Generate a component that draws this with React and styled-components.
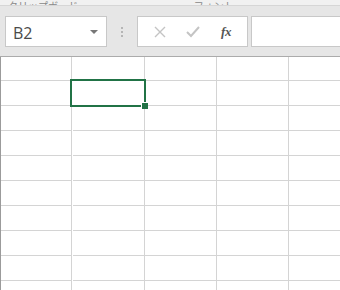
import styled, { createGlobalStyle } from 'styled-components';

const Global = createGlobalStyle`
  html, body {
    margin: 0;
    padding: 0;
    background: #ffffff;
    overflow: hidden;
  }
  body {
    font-family: "Open Sans", "Noto Sans", "Noto Sans CJK JP", sans-serif;
  }
`;

const Page = styled.div`
  width: 340px;
  height: 290px;
  overflow: hidden;
  display: flex;
  flex-direction: column;
`;

const Ribbon = styled.div`
  flex-shrink: 0;
  height: 5px;
  overflow: hidden;
  background: #f1f1f1;
  border-bottom: 1px solid #d6d6d6;
  display: flex;
  align-items: flex-end;
  padding-left: 8px;
  gap: 14px;
`;

const RibbonLabel = styled.span`
  font-family: "Noto Sans CJK JP", sans-serif;
  font-size: 10px;
  line-height: 10px;
  margin-bottom: -6px;
  color: #888;
  white-space: nowrap;
  margin-left: ${(p) => p.$offset || 0}px;
`;

const Toolbar = styled.div`
  flex-shrink: 0;
  height: 51px;
  background: #e6e6e6;
  border-bottom: 1px solid #ababab;
  display: flex;
  align-items: flex-start;
  padding: 10px 0 0 5px;
  box-sizing: border-box;
`;

const NameBox = styled.div`
  width: 102px;
  height: 31px;
  box-sizing: border-box;
  background: #fff;
  border: 1px solid #c8c8c8;
  display: flex;
  align-items: center;
  justify-content: space-between;
  padding: 3px 8px 0 7px;
`;

const NameText = styled.span`
  font-family: "Open Sans", sans-serif;
  font-size: 16px;
  color: #4a4a4a;
`;

const Caret = styled.span`
  width: 0;
  height: 0;
  border-left: 4px solid transparent;
  border-right: 4px solid transparent;
  border-top: 4px solid #777;
  margin-bottom: 3px;
`;

const Grip = styled.div`
  width: 30px;
  height: 31px;
  display: flex;
  flex-direction: column;
  align-items: center;
  justify-content: center;
  gap: 2px;
`;

const Dot = styled.span`
  width: 2px;
  height: 2px;
  background: #b5b5b5;
`;

const FxBox = styled.div`
  width: 111px;
  height: 31px;
  box-sizing: border-box;
  background: #fff;
  border: 1px solid #c8c8c8;
  display: flex;
  align-items: center;
  padding-left: 14px;
  gap: 17px;
`;

const IconSlot = styled.span`
  width: 16px;
  display: flex;
  justify-content: center;
  align-items: center;
`;

const FxText = styled.span`
  font-family: "Liberation Serif", serif;
  font-style: italic;
  font-weight: bold;
  font-size: 13px;
  color: #555;
  letter-spacing: -0.5px;
`;

const Input = styled.div`
  flex: 1;
  height: 31px;
  margin-left: 3px;
  box-sizing: border-box;
  background: #fff;
  border: 1px solid #c8c8c8;
  border-right: none;
`;

const Sheet = styled.div`
  position: relative;
  flex: 1;
  min-height: 0;
  overflow: hidden;
  display: grid;
  grid-template-columns: repeat(5, 72px);
  grid-template-rows: 24px repeat(9, 25px);
  border-left: 1px solid #9b9b9b;
  box-sizing: border-box;
`;

const Cell = styled.div`
  border-right: 1px solid #d4d4d4;
  border-bottom: 1px solid #d4d4d4;
  box-sizing: border-box;
  &:nth-child(5n + 1) {
    width: 71px;
  }
`;

const Selection = styled.div`
  position: absolute;
  left: 69px;
  top: 22px;
  width: 76px;
  height: 28px;
  box-sizing: border-box;
  border: 2px solid #217346;
  pointer-events: none;
`;

const Handle = styled.div`
  position: absolute;
  right: -4px;
  bottom: -4px;
  width: 6px;
  height: 6px;
  background: #217346;
  border: 1px solid #fff;
  border-right: none;
  border-bottom: none;
`;

export default function App() {
  const cells = Array.from({ length: 50 });
  return (
    <Page>
      <Global />
      <Ribbon>
        <RibbonLabel>クリップボード</RibbonLabel>
        <RibbonLabel $offset={10}>⌐</RibbonLabel>
        <RibbonLabel $offset={72}>フォント</RibbonLabel>
      </Ribbon>
      <Toolbar>
        <NameBox>
          <NameText>B2</NameText>
          <Caret />
        </NameBox>
        <Grip>
          <Dot />
          <Dot />
          <Dot />
        </Grip>
        <FxBox>
          <IconSlot>
            <svg width="12" height="12" viewBox="0 0 12 12">
              <path d="M1 1 L11 11 M11 1 L1 11" stroke="#c4c4c4" strokeWidth="1.4" fill="none" />
            </svg>
          </IconSlot>
          <IconSlot>
            <svg width="14" height="12" viewBox="0 0 14 12">
              <path d="M1 6 L5 10 L13 1" stroke="#c4c4c4" strokeWidth="2" fill="none" />
            </svg>
          </IconSlot>
          <IconSlot>
            <FxText>fx</FxText>
          </IconSlot>
        </FxBox>
        <Input />
      </Toolbar>
      <Sheet>
        {cells.map((_, i) => (
          <Cell key={i} />
        ))}
        <Selection>
          <Handle />
        </Selection>
      </Sheet>
    </Page>
  );
}
